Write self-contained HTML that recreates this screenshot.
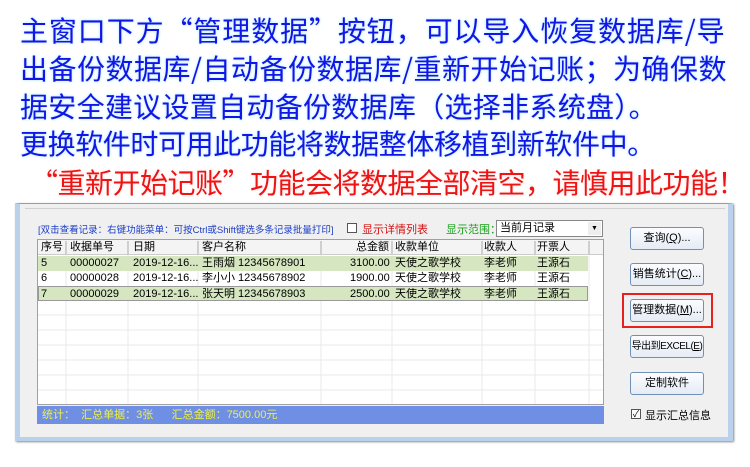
<!DOCTYPE html>
<html><head><meta charset="utf-8"><style>
*{margin:0;padding:0;box-sizing:border-box}
body{width:750px;height:467px;background:#fff;position:relative;overflow:hidden;font-family:"Liberation Sans","Noto Sans CJK SC",sans-serif}
.l{position:absolute;left:20px;font-family:"Noto Sans CJK SC",sans-serif;font-size:28px;line-height:34px;color:#1414e6;white-space:nowrap;text-shadow:0 0 3px #bfefff,0 0 2px #cdf3ff,0 0 1px #e0f8ff}
.r{color:#ee1414;text-shadow:0 0 3px #ffe0e0}
.abs{position:absolute}
.win{left:15px;top:203px;width:718px;height:238px;background:#f0f0f0;border:1px solid #8aa0b8;border-left:5px solid #b9d1ea;border-right:5px solid #b9d1ea;border-bottom:4px solid #b9d1ea;box-shadow:1px 1px 2px #888}
.s{font-size:11px;color:#000;white-space:nowrap}
.tbl{left:37px;top:239px;width:567px;height:166px;background:#fff;border:1px solid #a0a0a0;overflow:hidden}
.row{position:absolute;left:0;height:15px;width:550px;font-size:11px;line-height:15px}
.row span{position:absolute;top:0;white-space:nowrap}
.btn{position:absolute;left:630px;width:74px;height:23px;border:1px solid #7090b8;border-radius:3px;background:linear-gradient(#fbfcff,#e6ecf5);font-size:11px;text-align:center;line-height:21px;color:#000;white-space:nowrap;overflow:hidden}
</style></head><body>
<div class="l" style="top:13px;letter-spacing:0.9px">主窗口下方“管理数据”按钮，可以导入恢复数据库/导</div>
<div class="l" style="top:51px;letter-spacing:0.5px">出备份数据库/自动备份数据库/重新开始记账；为确保数</div>
<div class="l" style="top:89px;letter-spacing:0.3px">据安全建议设置自动备份数据库（选择非系统盘）。</div>
<div class="l" style="top:126px;letter-spacing:-0.4px">更换软件时可用此功能将数据整体移植到新软件中。</div>
<div class="l r" style="top:165px;left:30px;letter-spacing:-0.5px">“重新开始记账”功能会将数据全部清空，请慎用此功能！</div>

<div class="abs win"></div>
<div class="abs" style="left:25px;top:208px;width:700px;border-top:1px solid #d0d0d0"></div>
<div class="abs s" style="left:38px;top:222px;color:#1a3cc8;font-size:9.5px">[双击查看记录：右键功能菜单：可按Ctrl或Shift键选多条记录批量打印]</div>
<div class="abs" style="left:347px;top:223px;width:10px;height:10px;border:1px solid #555;background:#fff"></div>
<div class="abs s" style="left:362px;top:221px;color:#d81010;font-size:11px">显示详情列表</div>
<div class="abs s" style="left:446px;top:221px;color:#1aa01a;font-size:11px">显示范围：</div>
<div class="abs" style="left:496px;top:220px;width:107px;height:17px;border:1px solid #888;background:#fff;font-size:11px;line-height:15px;padding-left:3px">当前月记录<span style="position:absolute;right:1px;top:1px;width:13px;height:13px;background:#eee;font-size:7px;text-align:center;line-height:13px">▼</span></div>

<div class="abs tbl">
<div class="row" style="top:0;height:15px;background:#f4f4f4;border-bottom:1px solid #ccc;width:567px">
<span style="left:3px">序号</span><span style="left:32px">收据单号</span><span style="left:95px">日期</span><span style="left:164px">客户名称</span><span style="left:318px">总金额</span><span style="left:357px">收款单位</span><span style="left:446px">收款人</span><span style="left:499px">开票人</span>
</div>
<svg class="abs" style="left:0;top:0" width="567" height="166">
<g stroke="#e8e8e8"><line x1="28" y1="15" x2="28" y2="166"/><line x1="90" y1="15" x2="90" y2="166"/><line x1="160" y1="15" x2="160" y2="166"/><line x1="283" y1="15" x2="283" y2="166"/><line x1="354" y1="15" x2="354" y2="166"/><line x1="444" y1="15" x2="444" y2="166"/><line x1="497" y1="15" x2="497" y2="166"/><line x1="551" y1="15" x2="551" y2="166"/>
<line x1="0" y1="75" x2="567" y2="75"/><line x1="0" y1="90" x2="567" y2="90"/><line x1="0" y1="105" x2="567" y2="105"/><line x1="0" y1="120" x2="567" y2="120"/><line x1="0" y1="135" x2="567" y2="135"/><line x1="0" y1="150" x2="567" y2="150"/></g>
<g stroke="#aaa"><line x1="28" y1="1" x2="28" y2="14"/><line x1="90" y1="1" x2="90" y2="14"/><line x1="160" y1="1" x2="160" y2="14"/><line x1="283" y1="1" x2="283" y2="14"/><line x1="354" y1="1" x2="354" y2="14"/><line x1="444" y1="1" x2="444" y2="14"/><line x1="497" y1="1" x2="497" y2="14"/><line x1="551" y1="1" x2="551" y2="14"/></g>
</svg>
<div class="row" style="top:16px;background:#d5e6c0"><span style="left:3px">5</span><span style="left:32px">00000027</span><span style="left:95px">2019-12-16...</span><span style="left:164px">王雨烟 12345678901</span><span style="left:312px">3100.00</span><span style="left:357px">天使之歌学校</span><span style="left:446px">李老师</span><span style="left:499px">王源石</span></div>
<div class="row" style="top:31px"><span style="left:3px">6</span><span style="left:32px">00000028</span><span style="left:95px">2019-12-16...</span><span style="left:164px">李小小 12345678902</span><span style="left:312px">1900.00</span><span style="left:357px">天使之歌学校</span><span style="left:446px">李老师</span><span style="left:499px">王源石</span></div>
<div class="row" style="top:46px;background:#d5e6c0;border:1px solid #999"><span style="left:2px">7</span><span style="left:31px">00000029</span><span style="left:94px">2019-12-16...</span><span style="left:163px">张天明 12345678903</span><span style="left:311px">2500.00</span><span style="left:356px">天使之歌学校</span><span style="left:445px">李老师</span><span style="left:498px">王源石</span></div>
</div>
<div class="abs" style="left:37px;top:406px;width:567px;height:18px;background:#6f8fe4;color:#f0f040;font-size:11px;line-height:18px;padding-left:5px;white-space:nowrap">统计：&nbsp; 汇总单据：3张 &nbsp; &nbsp; &nbsp;汇总金额：7500.00元</div>

<div class="btn" style="top:227px">查询(<u>Q</u>)...</div>
<div class="btn" style="top:263px">销售统计(<u>C</u>)...</div>
<div class="abs" style="left:622px;top:293px;width:91px;height:35px;border:2px solid #e82020"></div>
<div class="btn" style="top:299px">管理数据(<u>M</u>)...</div>
<div class="btn" style="top:335px;font-size:10px;letter-spacing:-0.5px">导出到EXCEL(<u>E</u>)</div>
<div class="btn" style="top:372px">定制软件</div>
<div class="abs" style="left:631px;top:409px;width:10px;height:10px;border:1px solid #555;background:#fff;font-size:9px;line-height:8px;text-align:center">✓</div>
<div class="abs s" style="left:645px;top:407px">显示汇总信息</div>
</body></html>
